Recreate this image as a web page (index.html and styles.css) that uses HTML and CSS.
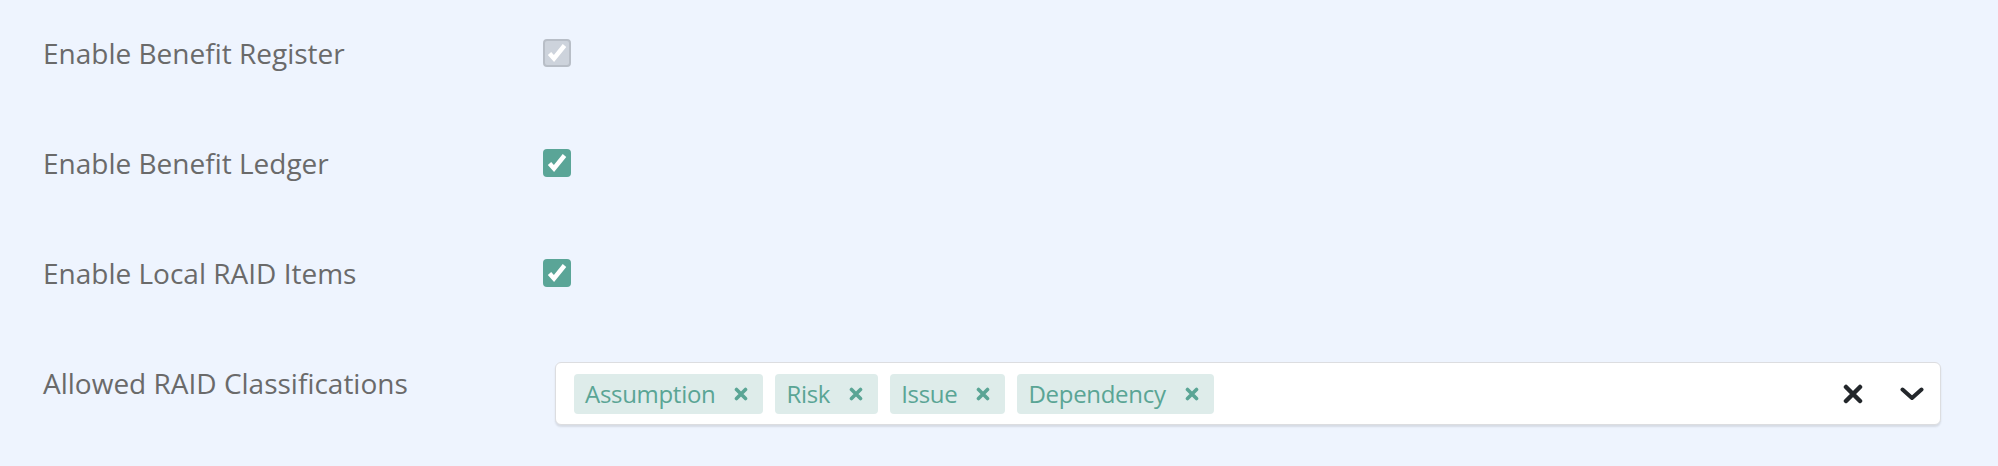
FILE: index.html
```html
<!DOCTYPE html>
<html lang="en">
<head>
<meta charset="utf-8">
<title>RAID settings</title>
<link rel="stylesheet" href="styles.css">
</head>
<body>
<div class="form">
  <div class="row">
    <div class="label">Enable Benefit Register</div>
    <div class="control">
      <span class="checkbox disabled">
        <svg viewBox="0 0 28 28" width="28" height="28"><path d="M6.5 14.5 L11 19.5 L21.5 6.5" fill="none" stroke="#fff" stroke-width="4.5" stroke-linejoin="miter"/></svg>
      </span>
    </div>
  </div>
  <div class="row">
    <div class="label">Enable Benefit Ledger</div>
    <div class="control">
      <span class="checkbox">
        <svg viewBox="0 0 28 28" width="28" height="28"><path d="M6.5 14.5 L11 19.5 L21.5 6.5" fill="none" stroke="#fff" stroke-width="4.5" stroke-linejoin="miter"/></svg>
      </span>
    </div>
  </div>
  <div class="row">
    <div class="label">Enable Local RAID Items</div>
    <div class="control">
      <span class="checkbox">
        <svg viewBox="0 0 28 28" width="28" height="28"><path d="M6.5 14.5 L11 19.5 L21.5 6.5" fill="none" stroke="#fff" stroke-width="4.5" stroke-linejoin="miter"/></svg>
      </span>
    </div>
  </div>
  <div class="row row-select">
    <div class="label">Allowed RAID Classifications</div>
    <div class="select">
      <div class="tags">
        <span class="tag">Assumption<svg class="tag-x" viewBox="0 0 14 14" width="14" height="14"><path d="M2.5 2.5 L11.5 11.5 M11.5 2.5 L2.5 11.5" stroke="#5aa595" stroke-width="3.6" stroke-linecap="round"/></svg></span>
        <span class="tag">Risk<svg class="tag-x" viewBox="0 0 14 14" width="14" height="14"><path d="M2.5 2.5 L11.5 11.5 M11.5 2.5 L2.5 11.5" stroke="#5aa595" stroke-width="3.6" stroke-linecap="round"/></svg></span>
        <span class="tag">Issue<svg class="tag-x" viewBox="0 0 14 14" width="14" height="14"><path d="M2.5 2.5 L11.5 11.5 M11.5 2.5 L2.5 11.5" stroke="#5aa595" stroke-width="3.6" stroke-linecap="round"/></svg></span>
        <span class="tag">Dependency<svg class="tag-x" viewBox="0 0 14 14" width="14" height="14"><path d="M2.5 2.5 L11.5 11.5 M11.5 2.5 L2.5 11.5" stroke="#5aa595" stroke-width="3.6" stroke-linecap="round"/></svg></span>
      </div>
      <div class="indicators">
        <svg class="clear" viewBox="0 0 20 20" width="20" height="20"><path d="M3 3 L17 17 M17 3 L3 17" stroke="#23272b" stroke-width="4.5" stroke-linecap="round"/></svg>
        <svg class="chevron" viewBox="0 0 24 14" width="24" height="14"><path d="M2.5 2.5 L12 11 L21.5 2.5" fill="none" stroke="#23272b" stroke-width="4" stroke-linecap="round" stroke-linejoin="round"/></svg>
      </div>
    </div>
  </div>
</div>
</body>
</html>
```
FILE: styles.css
```css
html, body {
  margin: 0;
  padding: 0;
}
body {
  background: #eef4fe;
  font-family: "Open Sans", "Liberation Sans", sans-serif;
  width: 1998px;
  height: 466px;
  overflow: hidden;
}
.form {
  padding: 32px 57px 0 43px;
  display: flex;
  flex-direction: column;
  gap: 68px;
}
.row {
  display: flex;
  align-items: center;
  min-height: 42px;
}
.row-select {
  align-items: flex-start;
}
.label {
  width: 500px;
  flex: none;
  font-size: 28px;
  line-height: 42px;
  color: #6a6a6a;
}
.control {
  display: flex;
  align-items: center;
}
.checkbox {
  width: 28px;
  height: 28px;
  border-radius: 4px;
  background: #5aa597;
  display: block;
  box-sizing: border-box;
}
.checkbox svg {
  display: block;
}
.checkbox.disabled {
  background: #cdd3dc;
  border: 2px solid #b8bec7;
}
.checkbox.disabled svg {
  margin: -2px;
}
.select {
  flex: 1;
  margin-left: 12px;
  height: 63px;
  box-sizing: border-box;
  background: #fff;
  border: 1px solid #dcdde0;
  border-radius: 6px;
  box-shadow: 0 2px 2px rgba(0, 0, 0, 0.10);
  display: flex;
  align-items: center;
  justify-content: space-between;
  padding: 0 16px 0 18px;
}
.tags {
  display: flex;
  gap: 12px;
}
.tag {
  display: flex;
  align-items: center;
  height: 40px;
  padding: 0 15px 0 11px;
  background: #deecea;
  border-radius: 4px;
  color: #5aa595;
  font-size: 24px;
  letter-spacing: -0.3px;
  line-height: 40px;
}
.tag-x {
  margin-left: 19px;
  display: block;
}
.indicators {
  display: flex;
  align-items: center;
  gap: 37px;
}
.indicators svg {
  display: block;
}
```
